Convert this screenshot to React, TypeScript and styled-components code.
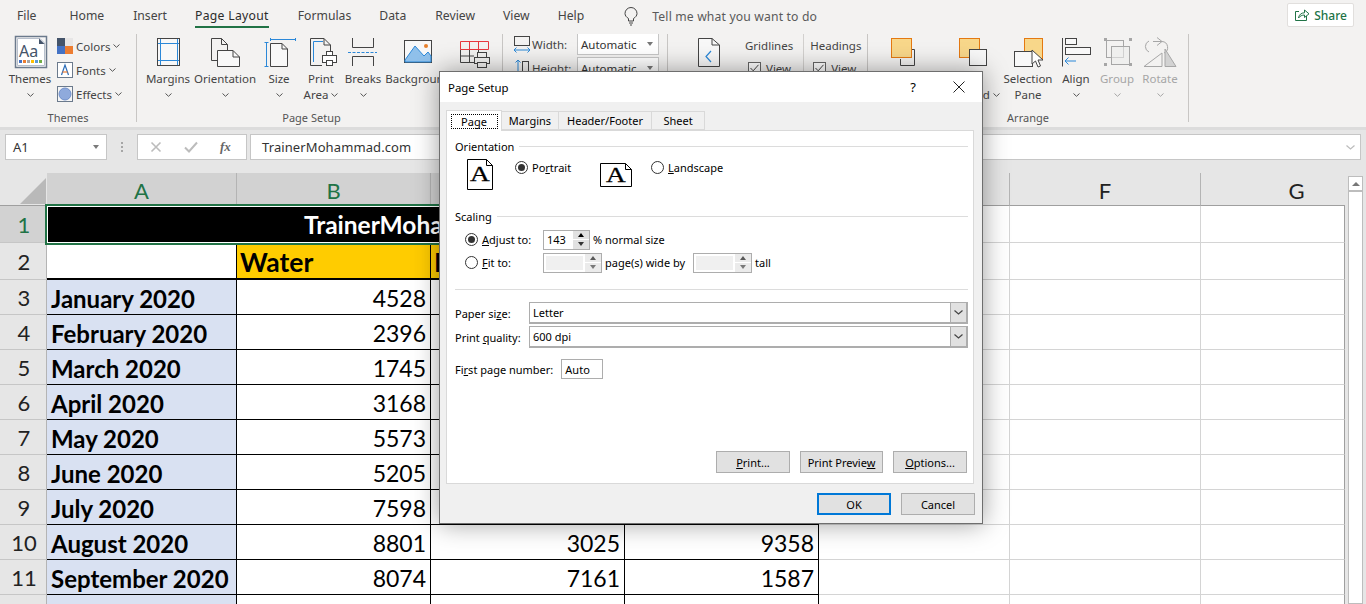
import { Fragment, ReactNode } from "react";
import styled, { createGlobalStyle } from "styled-components";

const uiFont = `"Noto Sans", "Open Sans", sans-serif`;
const sheetFont = `Lato, "Noto Sans", sans-serif`;
const ink = "#444444";
const blue = "#2b88d8";
const green = "#217346";

const GlobalStyle = createGlobalStyle`
  html, body {
    margin: 0;
    height: 604px;
    overflow: hidden;
    background: #ffffff;
  }
  * {
    box-sizing: border-box;
  }
  svg {
    display: block;
    flex: none;
    overflow: visible;
  }
`;

const Page = styled.div`
  position: relative;
  width: 1366px;
  height: 604px;
  overflow: hidden;
  font-family: ${uiFont};
  color: #3c3c3c;
`;

/* ---- top tabs ---- */

const TabStrip = styled.div`
  height: 34px;
  background: #f3f2f1;
  display: flex;
  align-items: flex-start;
  position: relative;
  padding-top: 7px;
`;

const MenuTab = styled.div<{ $left: number; $active?: boolean }>`
  margin-left: ${(p) => p.$left}px;
  height: 21px;
  font-size: 12.2px;
  line-height: 18px;
  white-space: nowrap;
  color: ${(p) => (p.$active ? "#2b2b2b" : "#444444")};
  border-bottom: ${(p) => (p.$active ? `2px solid ${green}` : "none")};
  letter-spacing: ${(p) => (p.$active ? "0.3px" : "0")};
`;

const TellMe = styled.div`
  margin-left: 40px;
  display: flex;
  align-items: center;
  gap: 14px;
  height: 18px;
  font-size: 12.2px;
  letter-spacing: 0.15px;
  color: #5a5a5a;
`;

const ShareButton = styled.div`
  position: absolute;
  left: 1287px;
  top: 3px;
  width: 67px;
  height: 24px;
  border: 1px solid #e1dfdd;
  border-radius: 2px;
  background: #ffffff;
  display: flex;
  align-items: center;
  justify-content: center;
  gap: 4px;
  font-size: 12px;
  font-weight: 500;
  color: ${green};
`;

/* ---- ribbon ---- */

const RibbonBar = styled.div`
  height: 93px;
  background: #f3f2f1;
  display: flex;
  align-items: flex-start;
  font-size: 11.5px;
  color: #444444;
`;

const Group = styled.div<{ $width: number }>`
  width: ${(p) => p.$width}px;
  height: 93px;
  display: flex;
  flex-direction: column;
`;

const GroupBody = styled.div<{ $pad?: number }>`
  height: 76px;
  display: flex;
  padding-left: ${(p) => p.$pad ?? 0}px;
`;

const GroupLabel = styled.div<{ $shift?: number }>`
  height: 16px;
  line-height: 16px;
  font-size: 11px;
  text-align: center;
  padding-right: ${(p) => p.$shift ?? 0}px;
  color: #555555;
  white-space: nowrap;
`;

const GroupDivider = styled.div`
  width: 1px;
  height: 88px;
  background: #c8c6c4;
`;

const TallButton = styled.div<{ $width: number; $muted?: boolean }>`
  width: ${(p) => p.$width}px;
  flex: none;
  padding-top: 3px;
  display: flex;
  flex-direction: column;
  align-items: center;
  color: ${(p) => (p.$muted ? "#a6a6a6" : "#444444")};
  white-space: nowrap;
`;

const IconBox = styled.div`
  height: 30px;
  margin-bottom: 4px;
  display: flex;
  justify-content: center;
`;

const LabelLine = styled.div`
  height: 16px;
  line-height: 16px;
  display: flex;
  align-items: center;
  justify-content: center;
  gap: 3px;
`;

const SmallStack = styled.div`
  margin-left: 5px;
  display: flex;
  flex-direction: column;
`;

const SmallButton = styled.div`
  height: 24px;
  display: flex;
  align-items: center;
  gap: 3px;
  white-space: nowrap;
`;

const ScaleColumn = styled.div`
  margin-top: -1px;
  display: flex;
  flex-direction: column;
  gap: 2px;
`;

const ScaleRow = styled.div`
  height: 22px;
  display: flex;
  align-items: center;
`;

const ScaleLabel = styled.div`
  width: 45px;
  margin-left: 1px;
`;

const ScaleSelect = styled.div`
  width: 82px;
  height: 22px;
  border: 1px solid #c6c6c6;
  background: #ffffff;
  display: flex;
  align-items: center;
  justify-content: space-between;
  padding: 0 5px 0 3px;
  color: #333333;
`;

const SmallCaret = styled.div<{ $color?: string }>`
  width: 0;
  height: 0;
  border-left: 3.5px solid transparent;
  border-right: 3.5px solid transparent;
  border-top: 4px solid ${(p) => p.$color ?? "#777777"};
`;

const OptionColumn = styled.div<{ $left: number; $rule?: boolean }>`
  margin-left: ${(p) => p.$left}px;
  padding-top: 4px;
  padding-left: ${(p) => (p.$rule ? 6 : 0)}px;
  border-left: ${(p) => (p.$rule ? "1px solid #d2d0ce" : "none")};
  display: flex;
  flex-direction: column;
  gap: 7px;
`;

const OptionTitle = styled.div`
  height: 16px;
  line-height: 16px;
`;

const OptionCheck = styled.div`
  display: flex;
  align-items: center;
  gap: 5px;
  margin-left: 3px;
  height: 14px;
`;

const CheckBox = styled.div`
  width: 13px;
  height: 13px;
  border: 1px solid #666666;
  background: #ffffff;
  display: flex;
  align-items: center;
  justify-content: center;
`;

/* ---- formula bar ---- */

const FormulaBar = styled.div`
  height: 46px;
  background: #e6e6e6;
  border-top: 3px solid #dcdcdc;
  padding: 4px 5px 0;
  display: flex;
  align-items: flex-start;
`;

const NameBox = styled.div`
  width: 102px;
  height: 26px;
  background: #ffffff;
  border: 1px solid #c6c6c6;
  padding: 0 7px;
  display: flex;
  align-items: center;
  justify-content: space-between;
  font-size: 13px;
  color: #333333;
`;

const BarGrip = styled.div`
  width: 30px;
  height: 26px;
  display: flex;
  flex-direction: column;
  align-items: center;
  justify-content: center;
  gap: 2px;
  i {
    width: 2px;
    height: 2px;
    background: #a6a6a6;
  }
`;

const FunctionBox = styled.div`
  width: 110px;
  height: 26px;
  background: #ffffff;
  border: 1px solid #c6c6c6;
  display: flex;
  align-items: center;
  padding-left: 12px;
  gap: 22px;
`;

const FxMark = styled.span`
  font-family: "Liberation Serif", serif;
  font-style: italic;
  font-weight: 700;
  font-size: 13px;
  color: #666666;
`;

const FormulaInput = styled.div`
  margin-left: 3px;
  width: 1111px;
  height: 26px;
  background: #ffffff;
  border: 1px solid #c6c6c6;
  padding: 0 5px 0 11px;
  display: flex;
  align-items: center;
  justify-content: space-between;
  font-size: 13px;
  letter-spacing: 0.1px;
  color: #333333;
`;

/* ---- sheet ---- */

const SheetArea = styled.div`
  display: flex;
  background: #e6e6e6;
  height: 431px;
  overflow: hidden;
`;

const SheetGrid = styled.div`
  width: 1345px;
  flex: none;
  display: grid;
  grid-template-columns: 47px 190px 194px 194px 194px 191px 191px 144px;
  grid-template-rows: 33px 37px 37px repeat(10, 35px);
  background: #ffffff;
`;

const Corner = styled.div`
  background: #e6e6e6;
  border-bottom: 1px solid #9f9f9f;
  display: flex;
  align-items: flex-end;
  justify-content: flex-end;
  padding: 0 1px 1px 0;
`;

const ColHead = styled.div<{ $on?: boolean; $clipped?: number }>`
  background: ${(p) => (p.$on ? "#d2d2d2" : "#e6e6e6")};
  border-right: ${(p) => (p.$clipped ? "none" : "1px solid #b4b4b4")};
  border-bottom: 1px solid #9f9f9f;
  color: ${(p) => (p.$on ? green : "#222222")};
  font-family: ${sheetFont};
  font-size: 22px;
  display: flex;
  align-items: center;
  justify-content: center;
  padding: 3px 0 0 ${(p) => p.$clipped ?? 0}px;
`;

const RowHead = styled.div<{ $on?: boolean }>`
  background: ${(p) => (p.$on ? "#d2d2d2" : "#e6e6e6")};
  border-bottom: 1px solid #c6c6c6;
  border-right: 1px solid #b4b4b4;
  color: ${(p) => (p.$on ? green : "#222222")};
  font-family: ${sheetFont};
  font-size: 22px;
  display: flex;
  align-items: center;
  justify-content: center;
  padding-left: 2px;
`;

const Cell = styled.div`
  border-right: 1px solid #d4d4d4;
  border-bottom: 1px solid #d4d4d4;
`;

const LastCell = styled(Cell)`
  border-right: 1px solid #9f9f9f;
`;

const TitleCell = styled.div`
  grid-column: span 4;
  background: #000000;
  color: #ffffff;
  font-family: ${sheetFont};
  font-weight: 700;
  font-size: 24.5px;
  display: flex;
  align-items: center;
  justify-content: center;
  outline: 2px solid ${green};
  box-shadow: inset 0 0 0 1px #ffffff;
  z-index: 1;
`;

const TableCell = styled.div<{ $fill?: string; $heavy?: boolean }>`
  background: ${(p) => p.$fill ?? "#ffffff"};
  border-right: 1px solid #000000;
  border-bottom: ${(p) => (p.$heavy ? "2px" : "1px")} solid #000000;
  font-family: ${sheetFont};
  font-size: 23px;
  color: #000000;
  display: flex;
  align-items: center;
  overflow: hidden;
  white-space: nowrap;
  padding: 2px 4px 0;
`;

const BoldCell = styled(TableCell)`
  font-weight: 700;
  font-size: 24px;
`;

const HeaderCell = styled(BoldCell)`
  font-size: 26.5px;
  padding-left: 3px;
`;

const NumberCell = styled(TableCell)`
  justify-content: flex-end;
`;

const ScrollTrack = styled.div`
  margin: 3px 0 0 3px;
  width: 15px;
  border: 1px solid #bdbdbd;
  background: #ffffff;
`;

const ScrollUp = styled.div`
  height: 15px;
  border-bottom: 2px solid #bdbdbd;
  display: flex;
  align-items: center;
  justify-content: center;
`;

const ScrollCaret = styled.div`
  width: 0;
  height: 0;
  border-left: 4px solid transparent;
  border-right: 4px solid transparent;
  border-bottom: 4px solid #777777;
`;

/* ---- page setup dialog ---- */

const Dialog = styled.div`
  position: absolute;
  z-index: 10;
  left: 439px;
  top: 71px;
  width: 544px;
  height: 453px;
  background: #f0f0f0;
  border: 1px solid #6e6e6e;
  box-shadow: 0 0 24px rgba(0, 0, 0, 0.38);
  display: flex;
  flex-direction: column;
  font-size: 11px;
  color: #000000;
`;

const DialogTitle = styled.div`
  height: 30px;
  flex: none;
  background: #ffffff;
  display: flex;
  align-items: center;
  padding-left: 8px;
  font-size: 11.4px;
`;

const TitleSpacer = styled.div`
  flex: 1;
`;

const HelpMark = styled.div`
  font-size: 13px;
  margin-right: 37px;
`;

const CloseMark = styled.div`
  margin-right: 17px;
`;

const DialogTabs = styled.div`
  height: 28px;
  flex: none;
  padding: 7px 0 0 6px;
  display: flex;
  align-items: flex-end;
`;

const DialogTab = styled.div<{ $active?: boolean; $width: number }>`
  width: ${(p) => p.$width}px;
  height: ${(p) => (p.$active ? 21 : 19)}px;
  margin-bottom: ${(p) => (p.$active ? -1 : 0)}px;
  background: ${(p) => (p.$active ? "#ffffff" : "#f0f0f0")};
  border: 1px solid #d9d9d9;
  border-bottom: ${(p) => (p.$active ? "none" : "1px solid #d9d9d9")};
  border-left: ${(p) => (p.$active ? "1px solid #d9d9d9" : "none")};
  display: flex;
  align-items: center;
  justify-content: center;
  position: relative;
  z-index: ${(p) => (p.$active ? 1 : 0)};
`;

const FocusRing = styled.div`
  border: 1px dotted #000000;
  width: 47px;
  height: 15px;
  line-height: 13px;
  text-align: center;
  margin-top: 1px;
`;

const Panel = styled.div`
  margin: 0 8px 0 6px;
  height: 354px;
  flex: none;
  background: #ffffff;
  border: 1px solid #d9d9d9;
  padding: 7px 5px 0 8px;
  display: flex;
  flex-direction: column;
`;

const SectionHead = styled.div`
  height: 16px;
  flex: none;
  display: flex;
  align-items: center;
  gap: 5px;
  &::after {
    content: "";
    flex: 1;
    height: 1px;
    background: #dcdcdc;
  }
`;

const OrientationRow = styled.div`
  height: 54px;
  flex: none;
  padding: 5px 0 0 12px;
  display: flex;
  align-items: flex-start;
`;

const OrientationOption = styled.div<{ $width: number }>`
  width: ${(p) => p.$width}px;
  flex: none;
  display: flex;
  align-items: flex-start;
`;

const RadioLabel = styled.label<{ $left: number; $width?: number }>`
  margin-left: ${(p) => p.$left}px;
  width: ${(p) => (p.$width ? `${p.$width}px` : "auto")};
  flex: none;
  height: 16px;
  display: flex;
  align-items: center;
  gap: 4px;
  white-space: nowrap;
`;

const RadioDot = styled.span<{ $on?: boolean }>`
  width: 13px;
  height: 13px;
  flex: none;
  border: 1px solid #333333;
  border-radius: 50%;
  background: #ffffff;
  display: flex;
  align-items: center;
  justify-content: center;
  &::after {
    content: "";
    width: 7px;
    height: 7px;
    border-radius: 50%;
    background: ${(p) => (p.$on ? "#333333" : "transparent")};
  }
`;

const ScaleLine = styled.div<{ $top: number }>`
  margin-top: ${(p) => p.$top}px;
  height: 19px;
  flex: none;
  display: flex;
  align-items: center;
  white-space: nowrap;
`;

const NumberField = styled.div<{ $width: number; $left: number; $off?: boolean }>`
  width: ${(p) => p.$width}px;
  height: 20px;
  margin: 0 3px 0 ${(p) => p.$left}px;
  flex: none;
  border: 1px solid #adadad;
  background: #ffffff;
  display: flex;
  align-items: center;
  justify-content: space-between;
  padding-left: ${(p) => (p.$off ? 2 : 3)}px;
`;

const FieldFill = styled.div`
  flex: 1;
  height: 14px;
  margin-right: 2px;
  background: #f0f0f0;
`;

const Spinner = styled.div<{ $off?: boolean }>`
  width: 16px;
  height: 18px;
  flex: none;
  display: flex;
  flex-direction: column;
  gap: 1px;
  opacity: ${(p) => (p.$off ? 0.65 : 1)};
`;

const SpinButton = styled.div`
  flex: 1;
  background: #e1e1e1;
  display: flex;
  align-items: center;
  justify-content: center;
`;

const SpinArrow = styled.div<{ $down?: boolean }>`
  width: 0;
  height: 0;
  border-left: 3.5px solid transparent;
  border-right: 3.5px solid transparent;
  ${(p) => (p.$down ? "border-top: 4px solid #333333;" : "border-bottom: 4px solid #000000;")}
`;

const Rule = styled.div`
  margin-top: 17px;
  height: 1px;
  flex: none;
  background: #dcdcdc;
`;

const FormRow = styled.div<{ $top: number }>`
  margin-top: ${(p) => p.$top}px;
  height: 22px;
  flex: none;
  display: flex;
  align-items: center;
  white-space: nowrap;
`;

const FormLabel = styled.div`
  width: 74px;
  flex: none;
`;

const ComboBox = styled.div`
  flex: 1;
  height: 22px;
  border: 1px solid #adadad;
  background: #ffffff;
  padding-left: 3px;
  display: flex;
  align-items: center;
  justify-content: space-between;
  border-width: 1px 2px 2px 1px;
`;

const ComboArrow = styled.div`
  width: 16px;
  height: 19px;
  border-left: 1px solid #adadad;
  background: #e1e1e1;
  display: flex;
  align-items: center;
  justify-content: center;
`;

const ShortField = styled.div`
  margin-left: 8px;
  width: 42px;
  height: 20px;
  border: 1px solid #adadad;
  padding-left: 3px;
  display: flex;
  align-items: center;
`;

const PanelActions = styled.div`
  margin-top: auto;
  padding-bottom: 10px;
  padding-right: 1px;
  display: flex;
  justify-content: flex-end;
  gap: 10px;
`;

const DialogButton = styled.div<{ $width: number; $primary?: boolean }>`
  width: ${(p) => p.$width}px;
  height: 22px;
  background: #e1e1e1;
  border: ${(p) => (p.$primary ? "2px solid #0078d7" : "1px solid #adadad")};
  display: flex;
  align-items: center;
  justify-content: center;
`;

const DialogFooter = styled.div`
  margin-top: 9px;
  padding-right: 7px;
  display: flex;
  justify-content: flex-end;
  gap: 10px;
`;

/* ---- drawings ---- */

const Chev = ({ color = "#555555" }: { color?: string }) => (
  <svg width="7" height="4" viewBox="0 0 7 4" fill="none" stroke={color}>
    <path d="M0.5 0.5L3.5 3.3L6.5 0.5" />
  </svg>
);

const Art = ({ w = 36, h = 30, children }: { w?: number; h?: number; children: ReactNode }) => (
  <svg width={w} height={h} viewBox={`0 0 ${w} ${h}`} fill="none" stroke={ink}>
    {children}
  </svg>
);

const ThemesArt = () => (
  <Art>
    <rect x="3.5" y="-0.5" width="31" height="31" fill="#f6f6f6" stroke="#6b7a8c" strokeWidth="1.5" />
    <path d="M5.5 1.5H28L32.5 6V28.5H5.5Z" fill="#ffffff" stroke="#b8c0cc" />
    <path d="M27 1.5V7H32.5Z" fill="#44546a" stroke="none" />
    <text x="7" y="19.5" fontFamily={uiFont} fontSize="16" fill="#44546a" stroke="none">Aa</text>
    {["#4472c4", "#ed7d31", "#a5a5a5", "#ffc000", "#5b9bd5", "#70ad47"].map((c, i) => (
      <rect key={c} x={7 + i * 4} y="23" width="3" height="3" fill={c} stroke="none" />
    ))}
  </Art>
);

const ColorsArt = () => (
  <Art w={16} h={16}>
    <rect width="8" height="8" fill="#44546a" stroke="none" />
    <rect x="8" width="8" height="8" fill="#e7e6e6" stroke="none" />
    <rect y="8" width="8" height="8" fill="#4472c4" stroke="none" />
    <rect x="8" y="8" width="8" height="8" fill="#ed7d31" stroke="none" />
  </Art>
);

const FontsArt = () => (
  <Art w={16} h={16}>
    <rect x="0.5" y="0.5" width="15" height="15" fill="#ffffff" stroke="#6b7a8c" />
    <path d="M4.5 13L8 3L11.5 13" stroke="#2b6cb8" strokeWidth="1.2" />
    <path d="M5.5 10H10.5" stroke="#ed7d31" strokeWidth="1.2" />
  </Art>
);

const EffectsArt = () => (
  <Art w={16} h={16}>
    <rect x="0.5" y="0.5" width="15" height="15" fill="#f6f6f6" stroke="#6b7a8c" />
    <circle cx="8" cy="8" r="6" fill="#8faadc" stroke="#6f8fca" />
  </Art>
);

const MarginsArt = () => (
  <Art>
    <rect x="7.5" y="1.5" width="22" height="27" fill="#f8f8f8" />
    <path d="M10.5 2V28M27.5 2V28M8 6.5H29M8 23.5H29" stroke={blue} />
  </Art>
);

const OrientationArt = () => (
  <Art>
    <path d="M10.5 23.5H4.5V1.5H14.5L20.5 7.5V13" />
    <path d="M14.5 1.5V7.5H20.5" />
    <path d="M10.5 13.5H26L32.5 20V29.5H10.5Z" fill="#f8f8f8" />
    <path d="M26 13.5V20H32.5" />
  </Art>
);

const SizeArt = () => (
  <Art>
    <path d="M3.5 5.5H7.5M5.5 5.5V29.5M3.5 29.5H7.5M9.5 1V4M9.5 2.5H34.5M34.5 1V4" stroke={blue} />
    <path d="M9.5 6.5H21L26.5 12V29.5H9.5Z" fill="#f8f8f8" />
    <path d="M21 6.5V12H26.5" />
  </Art>
);

const PrintAreaArt = () => (
  <Art>
    <path d="M19 28.5H7.5V1.5H21L27.5 8V15" />
    <path d="M21 1.5V8H27.5" />
    <path d="M10.5 25V4.5H20" stroke={blue} />
    <rect x="23.5" y="14.5" width="6" height="4" fill="#ffffff" />
    <rect x="19.5" y="18.5" width="14" height="7" fill="#ffffff" />
    <rect x="23.5" y="23.5" width="6" height="5" fill="#ffffff" />
  </Art>
);

const BreaksArt = () => (
  <Art>
    <path d="M7.5 1V10.5H28.5V1" />
    <path d="M3 15.5H32" stroke={blue} strokeDasharray="3 1.5" />
    <path d="M7.5 29V19.5H28.5V29" />
  </Art>
);

const BackgroundArt = () => (
  <Art>
    <rect x="4.5" y="3.5" width="27" height="22" fill="#f8f8f8" />
    <path d="M5 23L15 9L24 19L28 15L31 19V25H5Z" fill="#8fc0ea" stroke={blue} />
    <circle cx="26" cy="9" r="2" fill="#e8802c" stroke="none" />
  </Art>
);

const PrintTitlesArt = () => (
  <Art>
    <path d="M3.5 12.5V25.5H17M3.5 19H17M12.5 12V25M21.5 12V15" />
    <path d="M3.5 4.5H31.5V12.5H3.5ZM12.5 4.5V12.5M21.5 4.5V12.5" stroke="#e8383d" />
    <rect x="20.5" y="15.5" width="9" height="5" fill="#f3f2f1" />
    <rect x="17.5" y="20.5" width="15" height="6" fill="#f3f2f1" />
    <rect x="20.5" y="25.5" width="9" height="5" fill="#f3f2f1" />
  </Art>
);

const WidthArt = () => (
  <Art w={18} h={18}>
    <rect x="1.5" y="1.5" width="15" height="9" />
    <path d="M1 15H17M3.5 12.5L1 15L3.5 17.5M14.5 12.5L17 15L14.5 17.5" stroke={blue} />
  </Art>
);

const HeightArt = () => (
  <Art w={18} h={18}>
    <path d="M5 1V17M2.5 3.5L5 1L7.5 3.5" stroke={blue} />
    <rect x="9.5" y="2.5" width="6" height="14" />
  </Art>
);

const SheetFlowArt = () => (
  <Art>
    <path d="M7.5 1.5H21L28.5 8V29.5H7.5Z" fill="#f8f8f8" />
    <path d="M21 1.5V8H28.5" />
    <path d="M20 14L15 19.5L20 25" stroke={blue} strokeWidth="1.2" />
  </Art>
);

const BringArt = () => (
  <Art>
    <path d="M21 12.5H26.5V28.5H12.5V22" />
    <rect x="3.5" y="1.5" width="20" height="19" fill="#f8d78a" stroke="#e47911" />
  </Art>
);

const SendArt = () => (
  <Art>
    <rect x="8.5" y="1.5" width="20" height="19" fill="#f8d78a" stroke="#e47911" />
    <rect x="18.5" y="12.5" width="17" height="16" fill="#f8f8f8" />
  </Art>
);

const SelectionArt = () => (
  <Art>
    <rect x="14.5" y="1.5" width="18" height="20" fill="#f8d78a" stroke="#e47911" />
    <rect x="4.5" y="14.5" width="18" height="15" fill="#f8f8f8" />
    <path d="M22 13V27L25.5 24L28 30L30.5 29L28 23H33Z" fill="#ffffff" stroke="#444444" />
  </Art>
);

const AlignArt = () => (
  <Art>
    <path d="M4.5 1V29.5" />
    <rect x="7.5" y="1.5" width="11" height="6" fill="#f8f8f8" />
    <rect x="7.5" y="10.5" width="25" height="7" fill="#f8f8f8" />
    <path d="M18 24H7M10.5 20.5L7 24L10.5 27.5" stroke={blue} />
  </Art>
);

const GroupArt = () => (
  <Art>
    <g stroke="#a6a6a6">
      <rect x="7.5" y="3.5" width="17" height="17" fill="#f3f2f1" />
      <rect x="12.5" y="9.5" width="18" height="18" fill="#ececec" fillOpacity="0.6" />
    </g>
    <g fill="#a6a6a6" stroke="none">
      <rect x="5" y="1" width="3" height="3" />
      <rect x="30" y="1" width="3" height="3" />
      <rect x="5" y="26" width="3" height="3" />
      <rect x="30" y="26" width="3" height="3" />
    </g>
  </Art>
);

const RotateArt = () => (
  <Art>
    <g stroke="#a6a6a6">
      <path d="M11 4.5H20A6 6 0 0 1 22 16M15 0.5L20 4.5L15 8.5" />
      <path d="M7 4A6 6 0 0 0 7 15" />
      <path d="M2 29.5L20 16V29.5Z" fill="#f3f2f1" />
      <path d="M23 12L34 29.5H23Z" fill="#d2d2d2" />
    </g>
  </Art>
);

const BulbArt = () => (
  <svg width="14" height="19" viewBox="0 0 14 19" fill="none" stroke="#444444">
    <path d="M4.5 14V11.5C2.5 10.3 1 8.6 1 6.5A6 6 0 0 1 13 6.5C13 8.6 11.5 10.3 9.5 11.5V14Z" />
    <path d="M5 16H9M6 18H8" />
  </svg>
);

const ShareArt = () => (
  <svg width="16" height="14" viewBox="0 0 16 14" fill="none" stroke={green}>
    <path d="M5 3.5H1.5V12.5H12.5V8" />
    <path d="M4.5 10C5 6.5 7.5 4.8 10.5 4.8V2L15 5.8L10.5 9.5V7C8 7 6 8 4.5 10Z" />
  </svg>
);

const CrossArt = () => (
  <svg width="12" height="12" viewBox="0 0 12 12" stroke="#bcbcbc" strokeWidth="1.6" fill="none">
    <path d="M1.5 1.5L10.5 10.5M10.5 1.5L1.5 10.5" />
  </svg>
);

const TickArt = () => (
  <svg width="14" height="12" viewBox="0 0 14 12" stroke="#bcbcbc" strokeWidth="2" fill="none">
    <path d="M1 6.5L5 10.5L13 1.5" />
  </svg>
);

const BoxTick = () => (
  <svg width="9" height="8" viewBox="0 0 9 8" stroke="#444444" fill="none">
    <path d="M0.5 4L3.2 6.8L8.5 0.8" />
  </svg>
);

const CornerArt = () => (
  <svg width="26" height="26" viewBox="0 0 26 26">
    <path d="M26 0V26H0Z" fill="#b9b9b9" />
  </svg>
);

const PortraitArt = () => (
  <svg width="26" height="31" viewBox="0 0 26 31" fill="#ffffff" stroke="#000000">
    <path d="M0.5 0.5H19.5L25.5 6.5V30.5H0.5Z" />
    <path d="M19.5 0.5V6.5H25.5" fill="none" />
    <text transform="translate(3 22) scale(1.3 1)" fontFamily="Liberation Serif" fontSize="21" fill="#000000" stroke="#000000" strokeWidth="0.3">A</text>
  </svg>
);

const LandscapeArt = () => (
  <svg width="32" height="24" viewBox="0 0 32 24" fill="#ffffff" stroke="#000000">
    <path d="M0.5 0.5H25.5L31.5 6.5V23.5H0.5Z" />
    <path d="M25.5 0.5V6.5H31.5" fill="none" />
    <text transform="translate(6 19) scale(1.3 1)" fontFamily="Liberation Serif" fontSize="21" fill="#000000" stroke="#000000" strokeWidth="0.3">A</text>
  </svg>
);

const LandscapeSlot = styled.div`
  margin-top: 4px;
`;

const CloseArt = () => (
  <svg width="12" height="12" viewBox="0 0 12 12" stroke="#222222" fill="none">
    <path d="M0.5 0.5L11.5 11.5M11.5 0.5L0.5 11.5" />
  </svg>
);

const ComboChev = ({ color = "#444444" }: { color?: string }) => (
  <svg width="9" height="5" viewBox="0 0 9 5" fill="none" stroke={color} strokeWidth="1.2">
    <path d="M0.5 0.5L4.5 4L8.5 0.5" />
  </svg>
);

/* ---- data ---- */

const menuTabs: [string, number, boolean?][] = [
  ["File", 17],
  ["Home", 33],
  ["Insert", 29],
  ["Page Layout", 28],
  ["Formulas", 29],
  ["Data", 28],
  ["Review", 29],
  ["View", 28],
  ["Help", 28],
];

const activeTab = "Page Layout";

const months: [string, number?, number?, number?][] = [
  ["January 2020", 4528],
  ["February 2020", 2396],
  ["March 2020", 1745],
  ["April 2020", 3168],
  ["May 2020", 5573],
  ["June 2020", 5205],
  ["July 2020", 7598],
  ["August 2020", 8801, 3025, 9358],
  ["September 2020", 8074, 7161, 1587],
];

const Blanks = () => (
  <>
    <Cell />
    <Cell />
    <LastCell />
  </>
);

const Spin = ({ off }: { off?: boolean }) => (
  <Spinner $off={off}>
    <SpinButton><SpinArrow /></SpinButton>
    <SpinButton><SpinArrow $down /></SpinButton>
  </Spinner>
);

export default function App() {
  return (
    <Page>
      <GlobalStyle />

      <TabStrip>
        {menuTabs.map(([name, left]) => (
          <MenuTab key={name} $left={left} $active={name === activeTab}>{name}</MenuTab>
        ))}
        <TellMe><BulbArt /><span>Tell me what you want to do</span></TellMe>
        <ShareButton><ShareArt />Share</ShareButton>
      </TabStrip>

      <RibbonBar>
        <Group $width={136}>
          <GroupBody $pad={8}>
            <TallButton $width={44}>
              <IconBox><ThemesArt /></IconBox>
              <LabelLine>Themes</LabelLine>
              <LabelLine><Chev /></LabelLine>
            </TallButton>
            <SmallStack>
              <SmallButton><ColorsArt />Colors <Chev /></SmallButton>
              <SmallButton><FontsArt />Fonts <Chev /></SmallButton>
              <SmallButton><EffectsArt />Effects <Chev /></SmallButton>
            </SmallStack>
          </GroupBody>
          <GroupLabel>Themes</GroupLabel>
        </Group>
        <GroupDivider />

        <Group $width={365}>
          <GroupBody $pad={8}>
            <TallButton $width={46}>
              <IconBox><MarginsArt /></IconBox>
              <LabelLine>Margins</LabelLine>
              <LabelLine><Chev /></LabelLine>
            </TallButton>
            <TallButton $width={68}>
              <IconBox><OrientationArt /></IconBox>
              <LabelLine>Orientation</LabelLine>
              <LabelLine><Chev /></LabelLine>
            </TallButton>
            <TallButton $width={40}>
              <IconBox><SizeArt /></IconBox>
              <LabelLine>Size</LabelLine>
              <LabelLine><Chev /></LabelLine>
            </TallButton>
            <TallButton $width={44}>
              <IconBox><PrintAreaArt /></IconBox>
              <LabelLine>Print</LabelLine>
              <LabelLine>Area <Chev /></LabelLine>
            </TallButton>
            <TallButton $width={40}>
              <IconBox><BreaksArt /></IconBox>
              <LabelLine>Breaks</LabelLine>
              <LabelLine><Chev /></LabelLine>
            </TallButton>
            <TallButton $width={70}>
              <IconBox><BackgroundArt /></IconBox>
              <LabelLine>Background</LabelLine>
            </TallButton>
            <TallButton $width={44}>
              <IconBox><PrintTitlesArt /></IconBox>
              <LabelLine>Print</LabelLine>
              <LabelLine>Titles</LabelLine>
            </TallButton>
          </GroupBody>
          <GroupLabel $shift={16}>Page Setup</GroupLabel>
        </Group>
        <GroupDivider />

        <Group $width={164}>
          <GroupBody $pad={10}>
            <ScaleColumn>
              <ScaleRow>
                <WidthArt /><ScaleLabel>Width:</ScaleLabel>
                <ScaleSelect>Automatic<SmallCaret /></ScaleSelect>
              </ScaleRow>
              <ScaleRow>
                <HeightArt /><ScaleLabel>Height:</ScaleLabel>
                <ScaleSelect>Automatic<SmallCaret /></ScaleSelect>
              </ScaleRow>
            </ScaleColumn>
          </GroupBody>
        </Group>
        <GroupDivider />

        <Group $width={199}>
          <GroupBody $pad={23}>
            <TallButton $width={36}>
              <IconBox><SheetFlowArt /></IconBox>
            </TallButton>
            <OptionColumn $left={18}>
              <OptionTitle>Gridlines</OptionTitle>
              <OptionCheck><CheckBox><BoxTick /></CheckBox>View</OptionCheck>
            </OptionColumn>
            <OptionColumn $left={10} $rule>
              <OptionTitle>Headings</OptionTitle>
              <OptionCheck><CheckBox><BoxTick /></CheckBox>View</OptionCheck>
            </OptionColumn>
          </GroupBody>
        </Group>
        <GroupDivider />

        <Group $width={320}>
          <GroupBody $pad={6}>
            <TallButton $width={63}>
              <IconBox><BringArt /></IconBox>
              <LabelLine>Bring</LabelLine>
              <LabelLine>Forward <Chev /></LabelLine>
            </TallButton>
            <TallButton $width={63}>
              <IconBox><SendArt /></IconBox>
              <LabelLine>Send</LabelLine>
              <LabelLine>Backward <Chev /></LabelLine>
            </TallButton>
            <TallButton $width={56}>
              <IconBox><SelectionArt /></IconBox>
              <LabelLine>Selection</LabelLine>
              <LabelLine>Pane</LabelLine>
            </TallButton>
            <TallButton $width={40}>
              <IconBox><AlignArt /></IconBox>
              <LabelLine>Align</LabelLine>
              <LabelLine><Chev /></LabelLine>
            </TallButton>
            <TallButton $width={42} $muted>
              <IconBox><GroupArt /></IconBox>
              <LabelLine>Group</LabelLine>
              <LabelLine><Chev color="#a6a6a6" /></LabelLine>
            </TallButton>
            <TallButton $width={44} $muted>
              <IconBox><RotateArt /></IconBox>
              <LabelLine>Rotate</LabelLine>
              <LabelLine><Chev color="#a6a6a6" /></LabelLine>
            </TallButton>
          </GroupBody>
          <GroupLabel>Arrange</GroupLabel>
        </Group>
        <GroupDivider />
      </RibbonBar>

      <FormulaBar>
        <NameBox>A1<SmallCaret $color="#7a7a7a" /></NameBox>
        <BarGrip><i /><i /><i /></BarGrip>
        <FunctionBox><CrossArt /><TickArt /><FxMark>fx</FxMark></FunctionBox>
        <FormulaInput>TrainerMohammad.com<ComboChev color="#bcbcbc" /></FormulaInput>
      </FormulaBar>

      <SheetArea>
        <SheetGrid>
          <Corner><CornerArt /></Corner>
          {["A", "B", "C", "D"].map((c) => <ColHead key={c} $on>{c}</ColHead>)}
          <ColHead>E</ColHead>
          <ColHead>F</ColHead>
          <ColHead $clipped={47}>G</ColHead>

          <RowHead $on>1</RowHead>
          <TitleCell>TrainerMohammad.com</TitleCell>
          <Blanks />

          <RowHead>2</RowHead>
          <TableCell $heavy />
          <HeaderCell $fill="#ffcc00" $heavy>Water</HeaderCell>
          <HeaderCell $fill="#ffcc00" $heavy>Electricity</HeaderCell>
          <HeaderCell $fill="#ffcc00" $heavy />
          <Blanks />

          {months.map(([label, b, c, d], i) => (
            <Fragment key={label}>
              <RowHead>{i + 3}</RowHead>
              <BoldCell $fill="#d9e1f2">{label}</BoldCell>
              <NumberCell>{b}</NumberCell>
              <NumberCell>{c}</NumberCell>
              <NumberCell>{d}</NumberCell>
              <Blanks />
            </Fragment>
          ))}

          <RowHead>12</RowHead>
          <BoldCell $fill="#d9e1f2" />
          <NumberCell />
          <NumberCell />
          <NumberCell />
          <Blanks />
        </SheetGrid>
        <ScrollTrack><ScrollUp><ScrollCaret /></ScrollUp></ScrollTrack>
      </SheetArea>

      <Dialog>
        <DialogTitle>
          Page Setup
          <TitleSpacer />
          <HelpMark>?</HelpMark>
          <CloseMark><CloseArt /></CloseMark>
        </DialogTitle>
        <DialogTabs>
          <DialogTab $active $width={56}><FocusRing>Page</FocusRing></DialogTab>
          <DialogTab $width={57}>Margins</DialogTab>
          <DialogTab $width={93}>Header/Footer</DialogTab>
          <DialogTab $width={53}>Sheet</DialogTab>
        </DialogTabs>
        <Panel>
          <SectionHead>Orientation</SectionHead>
          <OrientationRow>
            <OrientationOption $width={133}>
              <PortraitArt />
              <RadioLabel $left={22}><RadioDot $on /><span>Po<u>r</u>trait</span></RadioLabel>
            </OrientationOption>
            <OrientationOption $width={140}>
              <LandscapeSlot><LandscapeArt /></LandscapeSlot>
              <RadioLabel $left={19}><RadioDot /><span><u>L</u>andscape</span></RadioLabel>
            </OrientationOption>
          </OrientationRow>

          <SectionHead>Scaling</SectionHead>
          <ScaleLine $top={6}>
            <RadioLabel $left={10} $width={78}><RadioDot $on /><span><u>A</u>djust to:</span></RadioLabel>
            <NumberField $left={0} $width={47}>143<Spin /></NumberField>
            % normal size
          </ScaleLine>
          <ScaleLine $top={4}>
            <RadioLabel $left={10} $width={78}><RadioDot /><span><u>F</u>it to:</span></RadioLabel>
            <NumberField $left={0} $width={59} $off><FieldFill /><Spin off /></NumberField>
            page(s) wide by
            <NumberField $left={8} $width={59} $off><FieldFill /><Spin off /></NumberField>
            tall
          </ScaleLine>
          <Rule />

          <FormRow $top={12}>
            <FormLabel>Paper si<u>z</u>e:</FormLabel>
            <ComboBox>Letter<ComboArrow><ComboChev /></ComboArrow></ComboBox>
          </FormRow>
          <FormRow $top={2}>
            <FormLabel>Print <u>q</u>uality:</FormLabel>
            <ComboBox>600 dpi<ComboArrow><ComboChev /></ComboArrow></ComboBox>
          </FormRow>
          <FormRow $top={10}>
            <span>Fi<u>r</u>st page number:</span>
            <ShortField>Auto</ShortField>
          </FormRow>

          <PanelActions>
            <DialogButton $width={74}><span><u>P</u>rint...</span></DialogButton>
            <DialogButton $width={83}><span>Print Previe<u>w</u></span></DialogButton>
            <DialogButton $width={74}><span><u>O</u>ptions...</span></DialogButton>
          </PanelActions>
        </Panel>
        <DialogFooter>
          <DialogButton $width={74} $primary>OK</DialogButton>
          <DialogButton $width={74}>Cancel</DialogButton>
        </DialogFooter>
      </Dialog>
    </Page>
  );
}
